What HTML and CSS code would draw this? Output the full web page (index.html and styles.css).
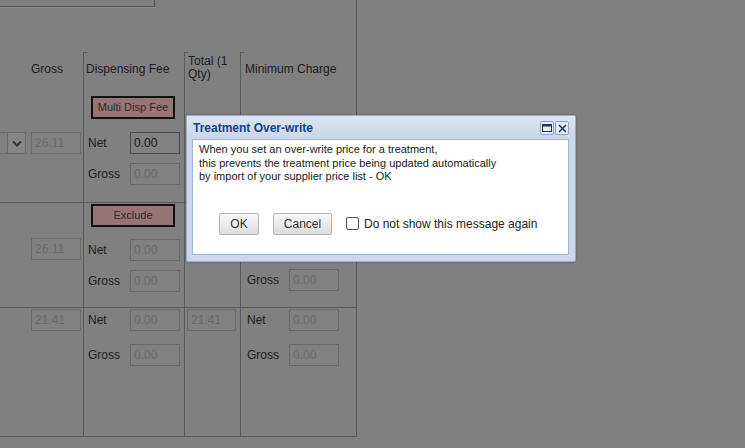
FILE: index.html
```html
<!DOCTYPE html>
<html>
<head>
<meta charset="utf-8">
<link rel="stylesheet" href="styles.css">
</head>
<body>
<div class="page">
  <div class="topfield"></div>
  <div class="table">
    <div class="row head">
      <div class="cell c0"><span class="hl gross-h">Gross</span></div>
      <div class="cell c1 tick"><span class="hl disp-h">Dispensing Fee</span></div>
      <div class="cell c2 tick"><span class="hl total-h">Total (1<br>Qty)</span></div>
      <div class="cell c3 tick"><span class="hl min-h">Minimum Charge</span></div>
    </div>

    <div class="row r1">
      <div class="cell c0">
        <div class="line">
          <div class="select"><div class="sel-btn"><svg width="10" height="7" viewBox="0 0 10 7"><path d="M1 1.5 L5 5.5 L9 1.5" fill="none" stroke="#2a3550" stroke-width="2"/></svg></div></div>
          <span class="fld dis gross-f">26.11</span>
        </div>
      </div>
      <div class="cell c1">
        <div class="pbtn">Multi Disp Fee</div>
        <div class="pair first"><span class="lbl">Net</span><span class="fld on">0.00</span></div>
        <div class="pair"><span class="lbl">Gross</span><span class="fld dis">0.00</span></div>
      </div>
      <div class="cell c2"></div>
      <div class="cell c3"></div>
    </div>

    <div class="row r2">
      <div class="cell c0">
        <div class="line"><span class="fld dis gross-f">26.11</span></div>
      </div>
      <div class="cell c1">
        <div class="pbtn">Exclude</div>
        <div class="pair first"><span class="lbl">Net</span><span class="fld dis">0.00</span></div>
        <div class="pair"><span class="lbl">Gross</span><span class="fld dis">0.00</span></div>
      </div>
      <div class="cell c2">
        <span class="fld dis total-f">26.11</span>
      </div>
      <div class="cell c3">
        <div class="pair"><span class="lbl">Net</span><span class="fld dis">0.00</span></div>
        <div class="pair"><span class="lbl">Gross</span><span class="fld dis">0.00</span></div>
      </div>
    </div>

    <div class="row r3">
      <div class="cell c0">
        <div class="line"><span class="fld dis gross-f">21.41</span></div>
      </div>
      <div class="cell c1">
        <div class="pair"><span class="lbl">Net</span><span class="fld dis">0.00</span></div>
        <div class="pair"><span class="lbl">Gross</span><span class="fld dis">0.00</span></div>
      </div>
      <div class="cell c2">
        <span class="fld dis total-f">21.41</span>
      </div>
      <div class="cell c3">
        <div class="pair"><span class="lbl">Net</span><span class="fld dis">0.00</span></div>
        <div class="pair"><span class="lbl">Gross</span><span class="fld dis">0.00</span></div>
      </div>
    </div>
  </div>
</div>

<div class="dialog">
  <div class="dlg-head">
    <span class="dlg-title">Treatment Over-write</span>
    <div class="tools">
      <span class="tool"><svg width="10" height="8" viewBox="0 0 10 8"><rect x="0.5" y="0.5" width="9" height="7" fill="none" stroke="#1f3560" stroke-width="1"/><rect x="0.5" y="0.5" width="9" height="2" fill="#1f3560"/></svg></span>
      <span class="tool"><svg width="9" height="9" viewBox="0 0 9 9"><path d="M1 1 L8 8 M8 1 L1 8" stroke="#1f3560" stroke-width="1.5"/></svg></span>
    </div>
  </div>
  <div class="dlg-body">
    <p class="msg">When you set an over-write price for a treatment,<br>this prevents the treatment price being updated automatically<br>by import of your supplier price list - OK</p>
    <div class="actions">
      <span class="btn ok">OK</span>
      <span class="btn cancel">Cancel</span>
      <label class="chk"><span class="box"></span>Do not show this message again</label>
    </div>
  </div>
</div>
</body>
</html>
```
FILE: styles.css
```css
* { box-sizing: border-box; }
html, body { margin: 0; padding: 0; }
body {
  width: 745px;
  height: 448px;
  background: #808080;
  font-family: "Liberation Sans", Arial, sans-serif;
  font-size: 12px;
  color: #1c1c1c;
  position: relative;
  overflow: hidden;
}
.page {
  width: 357px;
  height: 437px;
  border-right: 1px solid #595959;
  border-bottom: 1px solid #595959;
}
.topfield {
  width: 155px;
  height: 7px;
  border-right: 1px solid #555;
  border-bottom: 1px solid #555;
  box-shadow: 0 1px 0 #8e8e8e;
}
.table { margin-top: 45px; }
.row { display: flex; }
.cell { flex: none; }
.c0 { width: 83px; }
.c1 { width: 101px; border-left: 1px solid #595959; }
.c2 { width: 56px; border-left: 1px solid #595959; }
.c3 { width: 116px; border-left: 1px solid #595959; }

.head { height: 38px; }
.tick { position: relative; }
.tick::before {
  content: "";
  position: absolute;
  left: 0; top: 0;
  width: 3px;
  border-top: 1px solid #595959;
}
.hl { display: block; line-height: 14px; }
.gross-h { padding: 10px 0 0 31px; }
.disp-h { padding: 10px 0 0 2px; }
.min-h { padding: 10px 0 0 4px; }
.total-h { padding: 3px 0 0 3px; line-height: 13px; }

.r1 { height: 113px; border-bottom: 1px solid #595959; }
.r2 { height: 105px; border-bottom: 1px solid #595959; }
.r3 { height: 128px; }

.fld {
  display: block;
  width: 50px;
  height: 22px;
  line-height: 20px;
  border: 1px solid #6a6a6a;
  padding-left: 3px;
  font-size: 12px;
  color: #6b6b6b;
  background: #818181;
}
.fld.on { color: #161616; border-color: #4c4c4c; }

.line { display: flex; align-items: flex-start; }
.r1 .c0 { padding-top: 42px; }
.r2 .c0 { padding-top: 35px; }
.r3 .c0 { padding-top: 1px; }
.gross-f { margin-left: 31px; }
.r1 .gross-f { margin-left: 5px; }

.select {
  width: 26px;
  height: 22px;
  border: 1px solid #6a6a6a;
  border-left: none;
  display: flex;
  justify-content: flex-end;
}
.sel-btn {
  width: 18px;
  height: 20px;
  border-left: 1px solid #6a6a6a;
  background: #868686;
  display: flex;
  align-items: center;
  justify-content: center;
}

.pbtn {
  width: 84px;
  height: 23px;
  margin-left: 7px;
  border: 2px solid #111;
  background: #977575;
  color: #2e2a2a;
  text-align: center;
  line-height: 19px;
  font-size: 11px;
}
.r1 .c1 { padding-top: 6px; }
.r2 .c1 { padding-top: 1px; }
.r3 .c1 { padding-top: 1px; }

.pair { display: flex; align-items: center; margin-top: 9px; }
.pair.first { margin-top: 13px; }
.c1 .pair { padding-left: 4px; }
.c1 .lbl { width: 42px; }
.c3 .lbl { width: 42px; }
.c3 .pair { padding-left: 6px; }
.r2 .c3 { padding-top: 35px; }
.r2 .c3 .pair:first-child { margin-top: 0; }
.r3 .c1 .pair:first-child, .r3 .c3 .pair:first-child { margin-top: 0; }
.r3 .pair { margin-top: 13px; }
.r3 .c3 { padding-top: 1px; }
.c1 .pair .fld { width: 50px; }
.r2 .c1 .pair.first { margin-top: 12px; }

.r2 .c2 { padding: 35px 0 0 2px; }
.r3 .c2 { padding: 1px 0 0 2px; }
.total-f { width: 49px; }

/* dialog */
.dialog {
  position: absolute;
  left: 186px;
  top: 115px;
  width: 390px;
  height: 147px;
  background: #cdd9ea;
  border: 1px solid #9aacc6;
  border-radius: 2px;
  box-shadow: 0 0 3px rgba(0,0,0,0.25);
  padding: 0 5px 6px 5px;
  display: flex;
  flex-direction: column;
}
.dlg-head {
  height: 23px;
  display: flex;
  align-items: center;
  justify-content: space-between;
  background: linear-gradient(#dbe4f1, #cad7e9);
  margin: 0 -5px;
  padding: 0 6px 0 6px;
}
.dlg-title {
  font-weight: bold;
  font-size: 12px;
  color: #15428b;
}
.tools { display: flex; gap: 1px; margin-top: 1px; }
.tool {
  width: 14px;
  height: 14px;
  border: 1px solid #8ba3c7;
  border-radius: 2px;
  background: #e4ebf5;
  display: flex;
  align-items: center;
  justify-content: center;
}
.dlg-body {
  flex: 1;
  background: #fff;
  border: 1px solid #9cb7da;
  margin-right: 1px;
  padding: 3px 6px 0 6px;
}
.msg {
  margin: 0;
  font-size: 11px;
  line-height: 13.5px;
  color: #1a1a1a;
}
.actions {
  display: flex;
  align-items: center;
  margin-top: 29px;
  padding-left: 20px;
}
.btn {
  height: 22px;
  line-height: 20px;
  border: 1px solid #b3b3b3;
  border-radius: 2px;
  background: linear-gradient(#f6f6f6 0%, #ececec 50%, #dcdcdc 100%);
  color: #333;
  font-size: 12px;
  text-align: center;
}
.ok { width: 40px; }
.cancel { width: 59px; margin-left: 14px; }
.chk {
  display: flex;
  align-items: center;
  margin-left: 14px;
  font-size: 12px;
  color: #222;
}
.box {
  width: 13px;
  height: 13px;
  border: 1px solid #555;
  border-radius: 2px;
  background: #fff;
  margin-right: 5px;
}
```
